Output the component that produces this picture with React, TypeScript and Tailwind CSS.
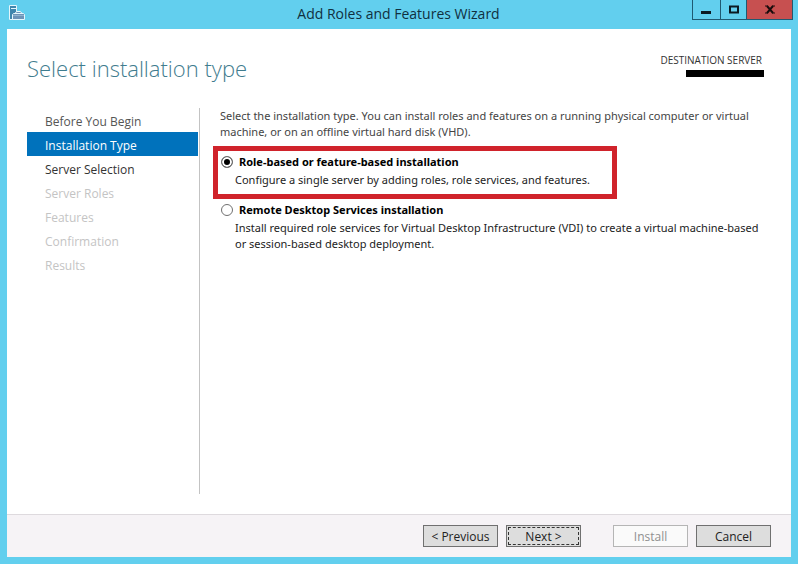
import { useState } from "react";
import clsx from "clsx";

type StepState = "done" | "current" | "next" | "disabled";

const steps: { label: string; state: StepState }[] = [
  { label: "Before You Begin", state: "done" },
  { label: "Installation Type", state: "current" },
  { label: "Server Selection", state: "next" },
  { label: "Server Roles", state: "disabled" },
  { label: "Features", state: "disabled" },
  { label: "Confirmation", state: "disabled" },
  { label: "Results", state: "disabled" },
];

const options = [
  {
    id: "role-based",
    title: "Role-based or feature-based installation",
    description:
      "Configure a single server by adding roles, role services, and features.",
    highlighted: true,
  },
  {
    id: "remote-desktop",
    title: "Remote Desktop Services installation",
    description:
      "Install required role services for Virtual Desktop Infrastructure (VDI) to create a virtual machine-based or session-based desktop deployment.",
    highlighted: false,
  },
];

function ServerIcon() {
  return (
    <svg width="18" height="18" viewBox="0 0 18 18" aria-hidden="true">
      <path d="M1.500 1.500h7v14h-7z" fill="#3f86ad" stroke="#e4f6fc" />
      <path d="M3 4.500h5" stroke="#e4f6fc" />
      <path
        d="M7.500 10V8.500l1.500-1h3l1.500 1V10"
        fill="#6d94b8"
        stroke="#e4f6fc"
      />
      <path
        d="M4.500 10.500l1-1h10l1 1v5h-12z"
        fill="#6d94b8"
        stroke="#e4f6fc"
      />
      <path d="M5 11.500h11" stroke="#8fb4d0" />
    </svg>
  );
}

function TitleBar() {
  return (
    <header className="flex h-[29px] items-start pr-[5px] pl-2">
      <div className="flex w-[97px] pt-1">
        <ServerIcon />
      </div>
      <h1 className="flex-1 text-center text-sm leading-7 text-[#10303f]">
        Add Roles and Features Wizard
      </h1>
      <div className="flex h-5 border border-t-0 border-[#1f5a72]">
        <button
          aria-label="Minimize"
          className="flex w-7 items-center justify-center border-r border-[#1f5a72]"
        >
          <svg width="11" height="10" viewBox="0 0 11 10">
            <path d="M0 6h10v3H0z" fill="#0b1a22" />
          </svg>
        </button>
        <button
          aria-label="Maximize"
          className="flex w-[26px] items-center justify-center border-r border-[#1f5a72]"
        >
          <svg width="10" height="10" viewBox="0 0 10 10">
            <path
              d="M1 1.500h8v6H1z"
              fill="none"
              stroke="#0b1a22"
              strokeWidth="2"
            />
          </svg>
        </button>
        <button
          aria-label="Close"
          className="flex w-[45px] items-center justify-center bg-[#c75050]"
        >
          <svg width="10" height="10" viewBox="0 0 10 10">
            <path
              d="M2 1l6 7M8 1L2 8"
              fill="none"
              stroke="#1a0c0c"
              strokeWidth="2"
            />
            <path
              d="M0 1h3M7 1h3M0 8h3M7 8h3"
              fill="none"
              stroke="#1a0c0c"
              strokeWidth="1"
            />
          </svg>
        </button>
      </div>
    </header>
  );
}

function Steps() {
  return (
    <nav className="w-[173px] shrink-0 border-r border-[#c3c3c3] pr-px">
      <ol>
        {steps.map((step) => (
          <li key={step.label}>
            <button
              disabled={step.state === "disabled"}
              aria-current={step.state === "current" ? "step" : undefined}
              className={clsx(
                "block h-6 w-full pt-1 pl-[18px] text-left text-xs",
                step.state === "done" && "text-[#555555]",
                step.state === "current" && "bg-[#0072bc] text-white",
                step.state === "next" && "text-[#333333]",
                step.state === "disabled" && "text-[#c4c4c4]",
              )}
            >
              {step.label}
            </button>
          </li>
        ))}
      </ol>
    </nav>
  );
}

const buttonClass =
  "h-[22px] w-[75px] border border-[#707070] bg-[#dddddd] pt-0.5 text-xs text-[#222222]";

export default function App() {
  const [selected, setSelected] = useState("role-based");

  return (
    <div className="flex min-h-screen flex-col bg-[#62cfee] font-['Open_Sans','Noto_Sans',sans-serif]">
      <TitleBar />
      <div className="mx-[7px] mb-[7px] flex flex-1 flex-col bg-white">
        <div className="flex h-[79px] items-start justify-between pr-[27px] pl-5">
          <h2 className="pt-[23px] text-[22px] leading-8 font-light text-[#3f7c8e]">
            Select installation type
          </h2>
          <div className="flex flex-col items-end pt-[23px]">
            <span className="pr-0.5 text-[10px] leading-4 text-[#333333]">
              DESTINATION SERVER
            </span>
            <span className="mt-0.5 h-[7px] w-[78px] bg-black" />
          </div>
        </div>

        <div className="flex flex-1 pb-5 pl-5">
          <Steps />
          <main className="flex-1 pr-3 pl-[13px] font-['Noto_Sans','Open_Sans',sans-serif] text-[11px] leading-4 text-[#222222]">
            <p className="pr-3 pl-[7px] text-[#444444]">
              Select the installation type. You can install roles and features
              on a running physical computer or virtual machine, or on an
              offline virtual hard disk (VHD).
            </p>
            <div className="flex flex-col items-start pt-1.5">
              {options.map((option) => (
                <div
                  key={option.id}
                  className={clsx(
                    "border-x-[5px] pt-[3px] pl-[3px]",
                    option.highlighted
                      ? "border-y-[5px] border-[#d0232b] pr-[22px] pb-1.5"
                      : "border-transparent pr-1",
                  )}
                >
                  <label className="flex items-center gap-1.5 font-bold text-black">
                    <input
                      type="radio"
                      name="installation-type"
                      checked={selected === option.id}
                      onChange={() => setSelected(option.id)}
                      aria-describedby={option.id}
                      className="size-3 appearance-none rounded-full border border-[#707070] bg-white checked:bg-black checked:shadow-[inset_0_0_0_2px_white]"
                    />
                    {option.title}
                  </label>
                  <p id={option.id} className="pt-0.5 pl-3.5">
                    {option.description}
                  </p>
                </div>
              ))}
            </div>
          </main>
        </div>

        <footer className="flex h-[43px] items-center justify-end gap-2 border-t border-[#dedade] bg-[#f6f3f6] pr-5">
          <button className={buttonClass}>&lt; Previous</button>
          <button
            className={clsx(
              buttonClass,
              "outline-1 -outline-offset-3 outline-dashed outline-[#333333]",
            )}
          >
            Next &gt;
          </button>
          <button
            disabled
            className="ml-6 h-[22px] w-[75px] border border-[#b5b5b5] bg-[#fafafa] pt-0.5 text-xs text-[#8f8f8f]"
          >
            Install
          </button>
          <button className={buttonClass}>Cancel</button>
        </footer>
      </div>
    </div>
  );
}
